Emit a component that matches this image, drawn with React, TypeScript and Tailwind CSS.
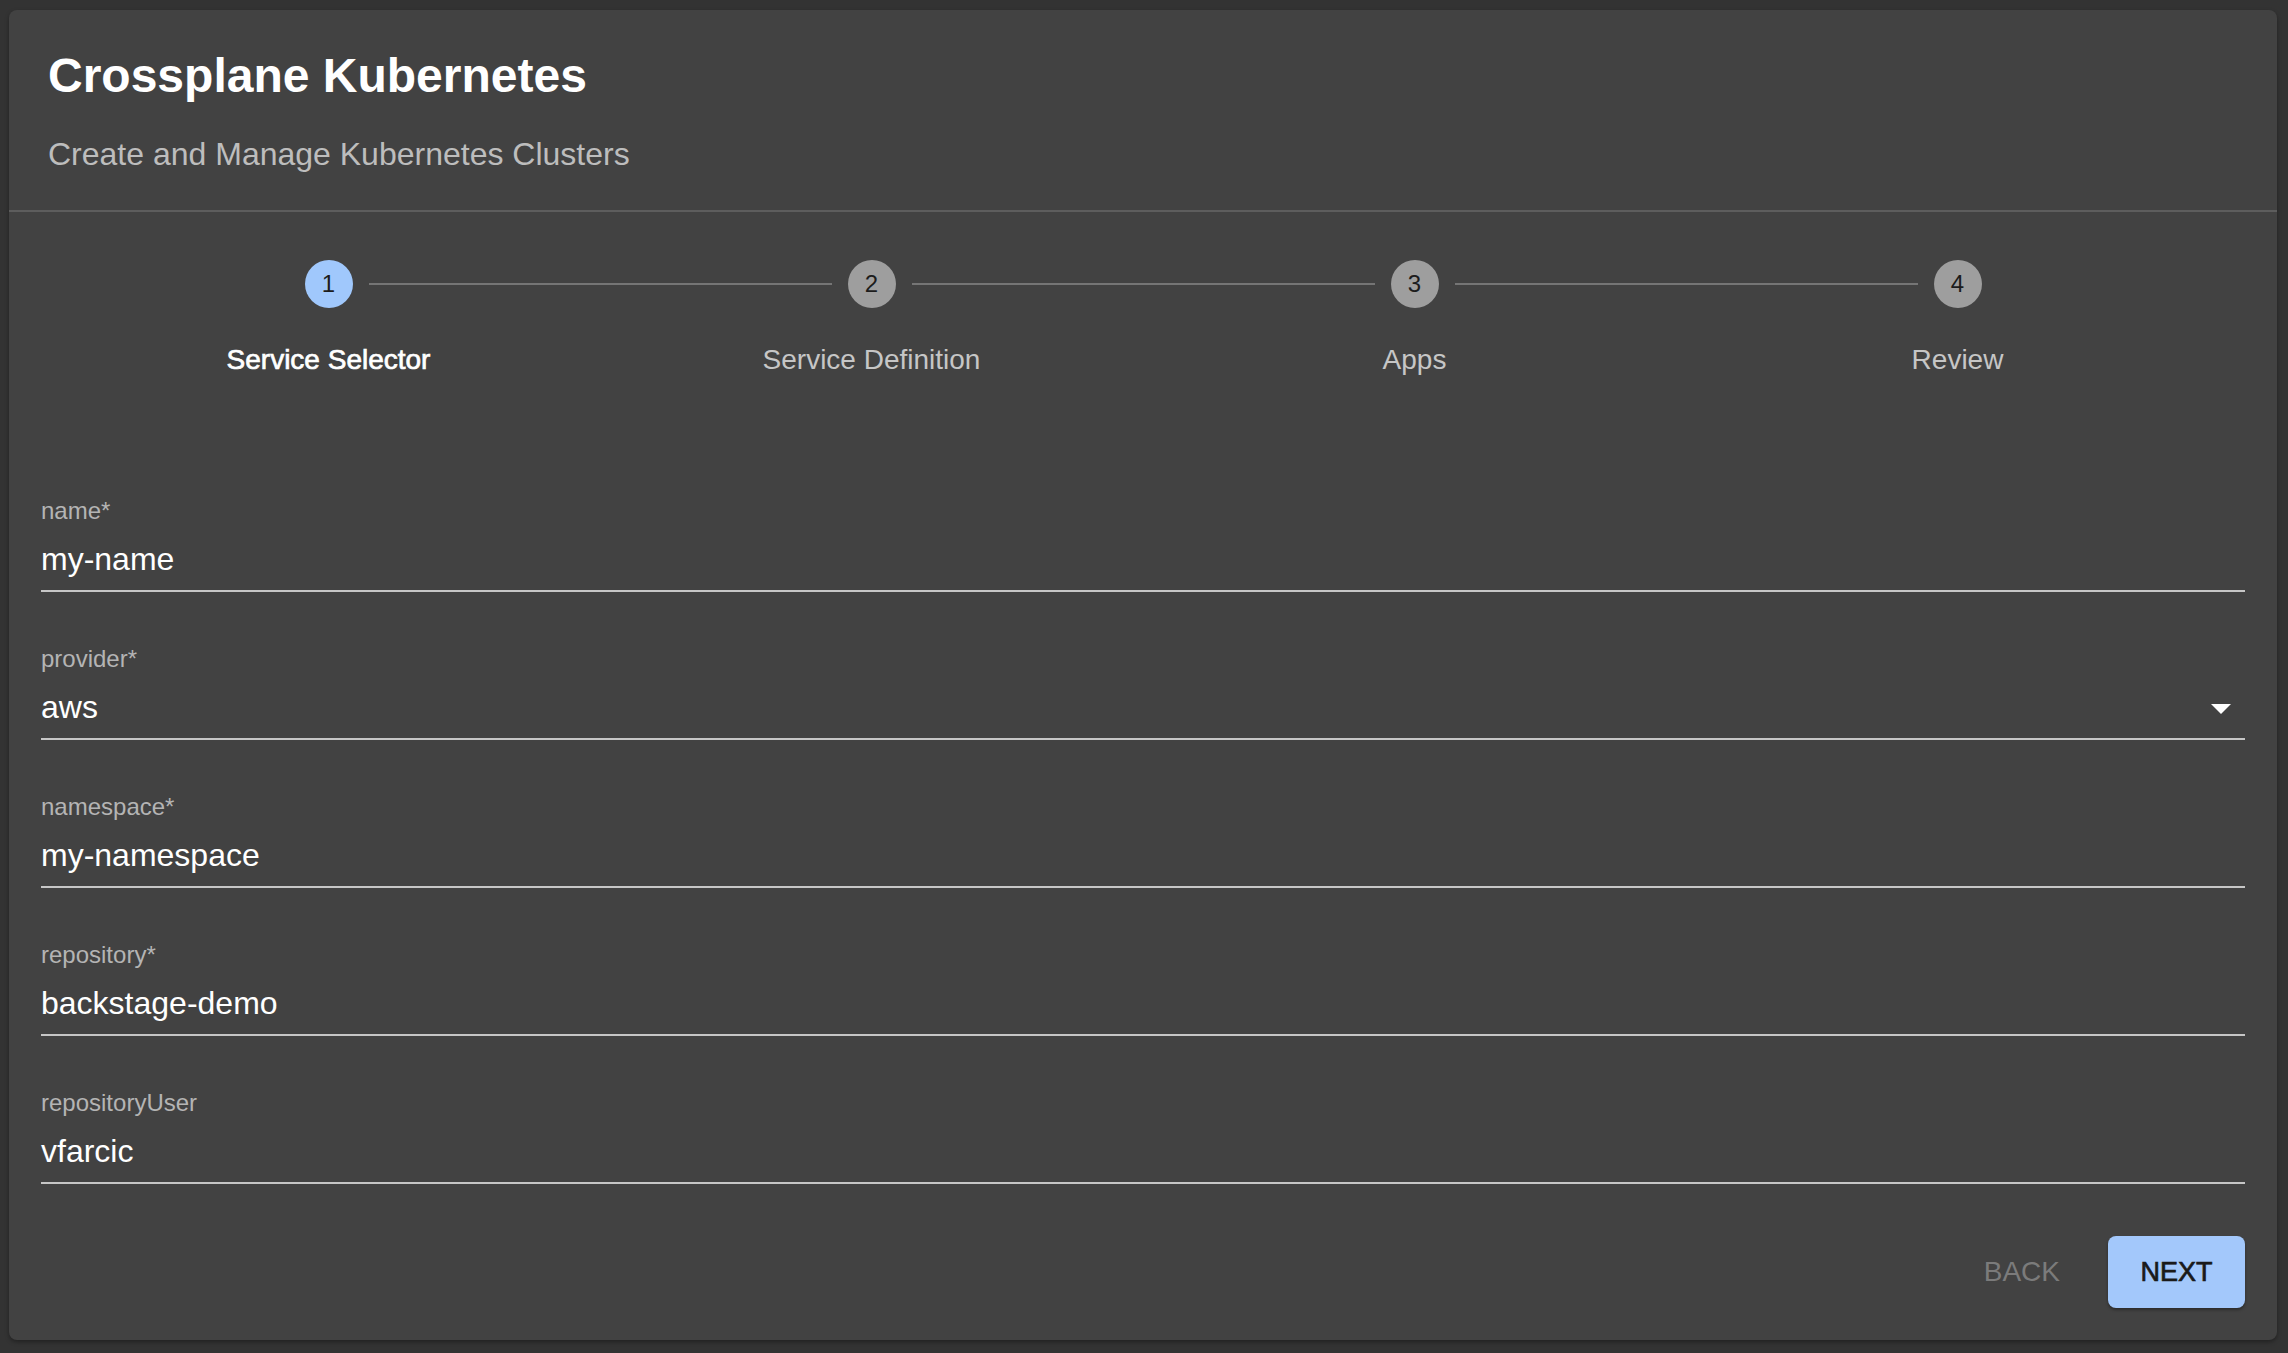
import type { FC } from 'react'

/** Кроки візарда. */
const STEPS = ['Service Selector', 'Service Definition', 'Apps', 'Review']

/** Поля форми першого кроку. */
const FIELDS: { label: string; value: string; select?: boolean }[] = [
  { label: 'name*', value: 'my-name' },
  { label: 'provider*', value: 'aws', select: true },
  { label: 'namespace*', value: 'my-namespace' },
  { label: 'repository*', value: 'backstage-demo' },
  { label: 'repositoryUser', value: 'vfarcic' },
]

const ACTIVE = 0

const Step: FC<{ index: number; label: string }> = ({ index, label }) => {
  const active = index === ACTIVE
  const first = index === 0
  const last = index === STEPS.length - 1

  return (
    <li className="flex flex-1 flex-col items-center">
      <div className="flex w-full items-center gap-4">
        <span className={`h-[2px] flex-1 ${first ? '' : 'bg-[#757575]'}`} />
        <span
          className={`flex h-12 w-12 items-center justify-center rounded-full text-[24px] leading-none text-[#1c1c1c] ${
            active ? 'bg-[#a0c8fc]' : 'bg-[#9e9e9e]'
          }`}
        >
          {index + 1}
        </span>
        <span className={`h-[2px] flex-1 ${last ? '' : 'bg-[#757575]'}`} />
      </div>
      <span
        className={`mt-8 text-[28px] leading-[40px] ${
          active ? 'text-white [-webkit-text-stroke:0.7px_white]' : 'text-[#c6c6c6]'
        }`}
      >
        {label}
      </span>
    </li>
  )
}

const Field: FC<{ label: string; value: string; select?: boolean }> = ({ label, value, select }) => (
  <div className="flex flex-col">
    <label className="text-[24px] leading-[24px] text-[#b4b4b4]">{label}</label>
    <div className="mt-[9px] flex border-b-2 border-[#c6c6c6] pb-3 pt-2">
      <span className="flex-1 text-[32px] leading-[38px] text-white">{value}</span>
      {select && (
        <svg
          width="20"
          height="10"
          viewBox="0 0 10 5"
          aria-hidden="true"
          className="mr-[14px] mt-4 self-start fill-white"
        >
          <path d="M0 0l5 5 5-5z" />
        </svg>
      )}
    </div>
  </div>
)

export default function App() {
  return (
    <div className="min-h-screen bg-[#333333] pb-[13px] pl-[9px] pr-[11px] pt-[10px] font-['Liberation_Sans',Arial,sans-serif]">
      <div className="flex h-[1330px] flex-col rounded-[8px] bg-[#424242] shadow-[0_2px_4px_rgba(0,0,0,0.35)]">
        <header className="border-b-2 border-[#5d5d5d] px-[39px] pb-8 pt-[34px]">
          <h1 className="text-[48px] font-bold leading-[64px] text-white">Crossplane Kubernetes</h1>
          <p className="mt-[22px] text-[32px] leading-[48px] text-[#bdbdbd]">
            Create and Manage Kubernetes Clusters
          </p>
        </header>

        <ol className="flex p-12">
          {STEPS.map((s, i) => (
            <Step key={s} index={i} label={s} />
          ))}
        </ol>

        <form className="mt-[71px] flex flex-col gap-[55px] px-8">
          {FIELDS.map((f) => (
            <Field key={f.label} {...f} />
          ))}
        </form>

        <div className="mt-[52px] flex items-center justify-end gap-8 px-8">
          <button type="button" disabled className="px-4 text-[28px] uppercase text-[#7b7b7b]">
            Back
          </button>
          <button
            type="button"
            className="flex h-[72px] w-[137px] items-center justify-center rounded-[8px] bg-[#a3c8fb] text-[27px] uppercase text-[#1a1a1a] shadow-[0_2px_3px_rgba(0,0,0,0.35)] [-webkit-text-stroke:0.7px_#1a1a1a]"
          >
            Next
          </button>
        </div>
      </div>
    </div>
  )
}
